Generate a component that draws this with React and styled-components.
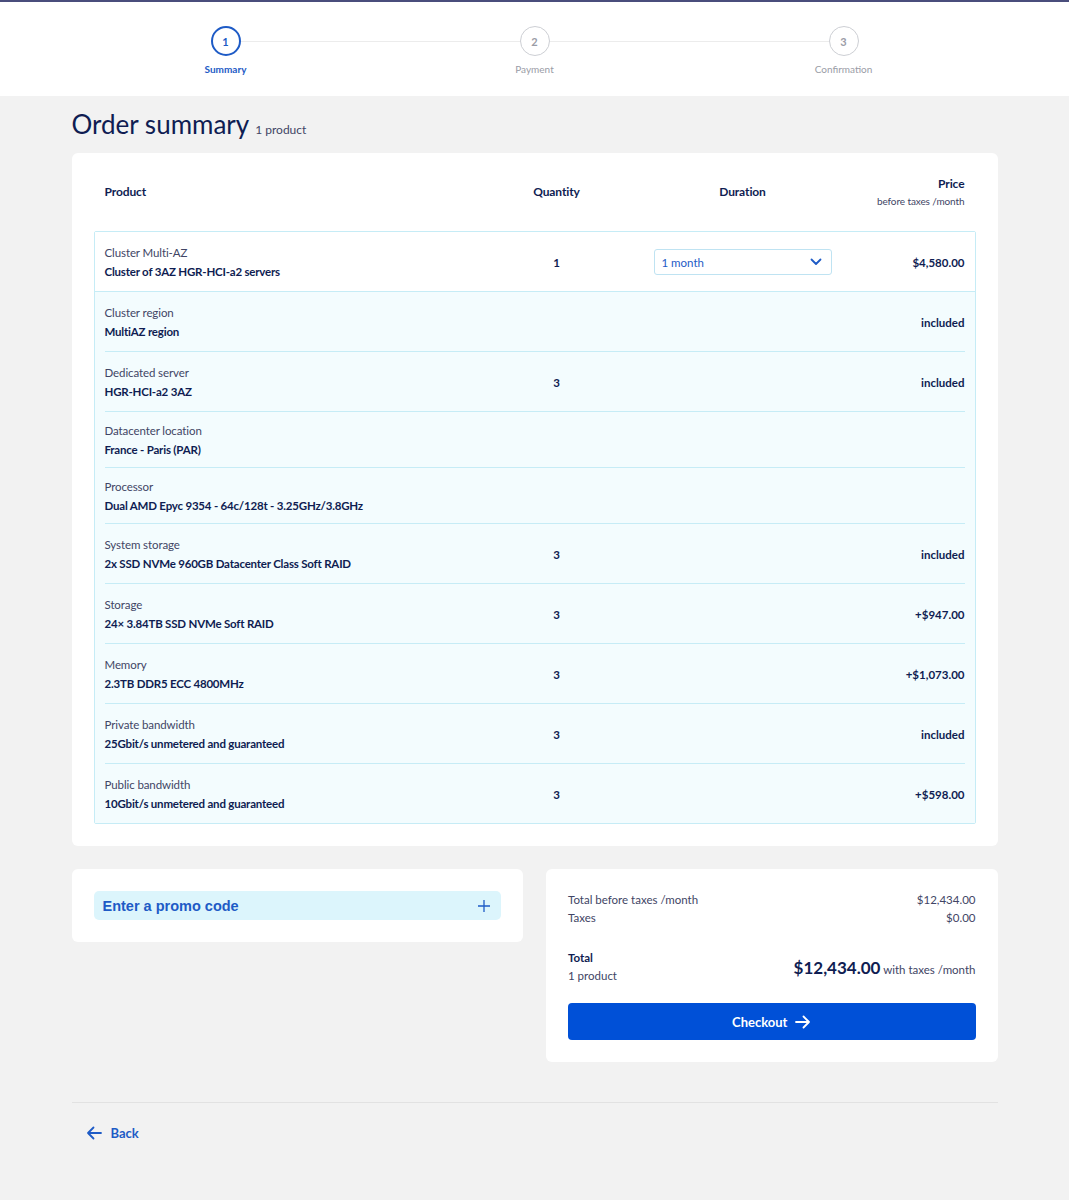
import React from "react";
import styled, { createGlobalStyle } from "styled-components";

const GlobalStyle = createGlobalStyle`
  body {
    margin: 0;
    background: #f2f2f2;
    font-family: Lato, "Open Sans", sans-serif;
    color: #0f1d52;
  }
  * { box-sizing: border-box; }
`;

const steps = [
  { n: 1, label: "Summary", active: true },
  { n: 2, label: "Payment" },
  { n: 3, label: "Confirmation" },
];

const rows = [
  { label: "Cluster region", value: "MultiAZ region", price: "included" },
  { label: "Dedicated server", value: "HGR-HCI-a2 3AZ", qty: 3, price: "included" },
  { label: "Datacenter location", value: "France - Paris (PAR)" },
  { label: "Processor", value: "Dual AMD Epyc 9354 - 64c/128t - 3.25GHz/3.8GHz" },
  { label: "System storage", value: "2x SSD NVMe 960GB Datacenter Class Soft RAID", qty: 3, price: "included" },
  { label: "Storage", value: "24× 3.84TB SSD NVMe Soft RAID", qty: 3, price: "+$947.00" },
  { label: "Memory", value: "2.3TB DDR5 ECC 4800MHz", qty: 3, price: "+$1,073.00" },
  { label: "Private bandwidth", value: "25Gbit/s unmetered and guaranteed", qty: 3, price: "included" },
  { label: "Public bandwidth", value: "10Gbit/s unmetered and guaranteed", qty: 3, price: "+$598.00" },
];

const ArrowRight = () => (
  <svg width="16" height="14" viewBox="0 0 16 14" fill="none" stroke="currentColor" strokeWidth="1.8" strokeLinecap="round" strokeLinejoin="round">
    <path d="M1 7h13M8.5 1.5 14 7l-5.5 5.5" />
  </svg>
);

const ArrowLeft = () => (
  <svg width="16" height="14" viewBox="0 0 16 14" fill="none" stroke="currentColor" strokeWidth="1.8" strokeLinecap="round" strokeLinejoin="round">
    <path d="M15 7H2M7.5 1.5 2 7l5.5 5.5" />
  </svg>
);

const Chevron = () => (
  <svg width="12" height="8" viewBox="0 0 12 8" fill="none" stroke="currentColor" strokeWidth="1.8" strokeLinecap="round" strokeLinejoin="round">
    <path d="M1.5 1.5 6 6l4.5-4.5" />
  </svg>
);

const Plus = () => (
  <svg width="12" height="12" viewBox="0 0 12 12" fill="none" stroke="currentColor" strokeWidth="1.3">
    <path d="M6 0v12M0 6h12" />
  </svg>
);

export default function App() {
  return (
    <>
      <GlobalStyle />
      <Header>
        <Stepper>
          {steps.map((s, i) => (
            <React.Fragment key={s.n}>
              {i > 0 && <Connector />}
              <Step>
                <StepCircle $active={s.active}>{s.n}</StepCircle>
                <StepLabel $active={s.active}>{s.label}</StepLabel>
              </Step>
            </React.Fragment>
          ))}
        </Stepper>
      </Header>

      <Main>
        <Title>
          Order summary <TitleCount>1 product</TitleCount>
        </Title>

        <Card $pad="0 22px 22px">
          <HeadRow>
            <HeadCell>Product</HeadCell>
            <HeadCell $align="center">Quantity</HeadCell>
            <HeadCell $align="center">Duration</HeadCell>
            <HeadCell $align="right">
              Price
              <HeadSub>before taxes /month</HeadSub>
            </HeadCell>
          </HeadRow>

          <Table>
            <MainRow>
              <Product>
                <Label>Cluster Multi-AZ</Label>
                <Value>Cluster of 3AZ HGR-HCI-a2 servers</Value>
              </Product>
              <NumCell $align="center">1</NumCell>
              <NumCell $align="center">
                <Select>
                  1 month
                  <Chevron />
                </Select>
              </NumCell>
              <NumCell $align="right">$4,580.00</NumCell>
            </MainRow>
            <SubList>
              {rows.map((r) => (
                <SubRow key={r.label}>
                  <Product>
                    <Label>{r.label}</Label>
                    <Value>{r.value}</Value>
                  </Product>
                  <NumCell $align="center">{r.qty}</NumCell>
                  <NumCell />
                  <NumCell $align="right">{r.price}</NumCell>
                </SubRow>
              ))}
            </SubList>
          </Table>
        </Card>

        <Bottom>
          <Card $pad="22px">
            <Promo>
              Enter a promo code
              <Plus />
            </Promo>
          </Card>

          <Card $pad="22px">
            <SumLine>
              <span>Total before taxes /month</span>
              <span>$12,434.00</span>
            </SumLine>
            <SumLine>
              <span>Taxes</span>
              <span>$0.00</span>
            </SumLine>
            <TotalRow>
              <div>
                <TotalLabel>Total</TotalLabel>
                <SumText>1 product</SumText>
              </div>
              <div>
                <BigPrice>$12,434.00</BigPrice>
                <PriceNote> with taxes /month</PriceNote>
              </div>
            </TotalRow>
            <Checkout>
              Checkout
              <ArrowRight />
            </Checkout>
          </Card>
        </Bottom>

        <Footer>
          <BackLink>
            <ArrowLeft />
            Back
          </BackLink>
        </Footer>
      </Main>
    </>
  );
}

const Header = styled.header`
  background: #fff;
  border-top: 2px solid #4a4e7c;
  height: 96px;
`;

const Stepper = styled.div`
  width: 926px;
  margin: 0 auto;
  padding: 24px 104px 0;
  display: flex;
  align-items: flex-start;
`;

const Step = styled.div`
  width: 100px;
  display: flex;
  flex-direction: column;
  align-items: center;
  position: relative;
  z-index: 1;
`;

const StepCircle = styled.div`
  width: 30px;
  height: 30px;
  border-radius: 50%;
  border: ${(p) => (p.$active ? "2px solid #1e5bc6" : "1.5px solid #cdcfd4")};
  color: ${(p) => (p.$active ? "#1e5bc6" : "#9a9ca6")};
  font-size: 11px;
  font-weight: 700;
  display: flex;
  align-items: center;
  justify-content: center;
  background: #fff;
`;

const StepLabel = styled.div`
  margin-top: 7px;
  font-size: 10px;
  font-weight: ${(p) => (p.$active ? 700 : 400)};
  color: ${(p) => (p.$active ? "#1e5bc6" : "#9a9ca6")};
`;

const Connector = styled.div`
  flex: 1;
  height: 1px;
  background: #ececec;
  margin: 15px -36px 0;
`;

const Main = styled.main`
  width: 926px;
  margin: 0 auto;
  padding: 12px 0 60px;
`;

const Title = styled.h1`
  margin: 0 0 7px;
  font-size: 26px;
  font-weight: 400;
  color: #0f1d52;
  line-height: 33px;
`;

const TitleCount = styled.span`
  font-size: 12px;
  color: #414565;
`;

const Card = styled.section`
  background: #fff;
  border-radius: 6px;
  padding: ${(p) => p.$pad};
`;

const grid = `
  display: grid;
  grid-template-columns: 359px 186px 186px 1fr;
  align-items: center;
`;

const HeadRow = styled.div`
  ${grid}
  height: 78px;
  padding: 0 11px;
`;

const HeadCell = styled.div`
  font-size: 12px;
  font-weight: 700;
  letter-spacing: -0.1px;
  text-align: ${(p) => p.$align || "left"};
  line-height: 16px;
`;

const HeadSub = styled.div`
  font-size: 10px;
  font-weight: 400;
  color: #414565;
  margin-top: 1px;
`;

const Table = styled.div`
  border: 1px solid #c6ecf6;
  border-radius: 2px;
`;

const MainRow = styled.div`
  ${grid}
  padding: 9px 10px 8px;
  background: #fff;
  border-bottom: 1px solid #c6ecf6;
`;

const SubList = styled.div`
  background: #f3fcfe;
  padding: 0 10px;
`;

const SubRow = styled.div`
  ${grid}
  padding: 9px 0 8px;
  border-bottom: 1px solid #c6ecf6;

  &:last-child {
    border-bottom: none;
  }
`;

const Product = styled.div`
  display: flex;
  flex-direction: column;
`;

const Label = styled.div`
  font-size: 11.5px;
  line-height: 19px;
  color: #414565;
  letter-spacing: -0.1px;
`;

const Value = styled.div`
  font-size: 11.5px;
  line-height: 19px;
  font-weight: 700;
  letter-spacing: -0.2px;
  white-space: nowrap;
`;

const NumCell = styled.div`
  font-size: 11.5px;
  font-weight: 700;
  display: flex;
  justify-content: ${(p) =>
    p.$align === "center" ? "center" : p.$align === "right" ? "flex-end" : "flex-start"};
  min-height: ${(p) => (p.children ? "42px" : "0")};
  align-items: center;
`;

const Select = styled.div`
  width: 178px;
  height: 26px;
  border: 1px solid #bfe3f2;
  border-radius: 3px;
  display: flex;
  align-items: center;
  justify-content: space-between;
  padding: 0 9px 0 7px;
  font-size: 11.5px;
  font-weight: 400;
  color: #1e5bc6;
  background: #fff;
`;

const Bottom = styled.div`
  display: grid;
  grid-template-columns: 1fr 1fr;
  gap: 23px;
  margin-top: 23px;
  align-items: start;
`;

const Promo = styled.div`
  height: 29px;
  background: #dcf5fc;
  border-radius: 5px;
  padding: 0 11px 0 9px;
  display: flex;
  align-items: center;
  justify-content: space-between;
  font-family: "Liberation Sans", Arial, sans-serif;
  font-size: 14.5px;
  font-weight: 700;
  color: #1e5bc6;
`;

const SumLine = styled.div`
  display: flex;
  justify-content: space-between;
  font-size: 11.5px;
  line-height: 18px;
  color: #414565;
`;

const TotalRow = styled.div`
  display: flex;
  justify-content: space-between;
  align-items: center;
  margin-top: 22px;
`;

const TotalLabel = styled.div`
  font-size: 11.5px;
  font-weight: 700;
  line-height: 18px;
`;

const SumText = styled.div`
  font-size: 11.5px;
  line-height: 18px;
  color: #414565;
`;

const BigPrice = styled.span`
  font-size: 17px;
  font-weight: 700;
`;

const PriceNote = styled.span`
  font-size: 11.5px;
  color: #414565;
`;

const Checkout = styled.button`
  margin-top: 18px;
  width: 100%;
  height: 37px;
  border: none;
  border-radius: 4px;
  background: #0050d7;
  color: #fff;
  font-family: inherit;
  font-size: 13px;
  font-weight: 700;
  display: flex;
  align-items: center;
  justify-content: center;
  gap: 8px;
`;

const Footer = styled.div`
  margin-top: 40px;
  border-top: 1px solid #e2e2e2;
  padding: 21px 14px;
`;

const BackLink = styled.a`
  display: inline-flex;
  align-items: center;
  gap: 9px;
  color: #1e5bc6;
  font-size: 13px;
  font-weight: 700;
`;
